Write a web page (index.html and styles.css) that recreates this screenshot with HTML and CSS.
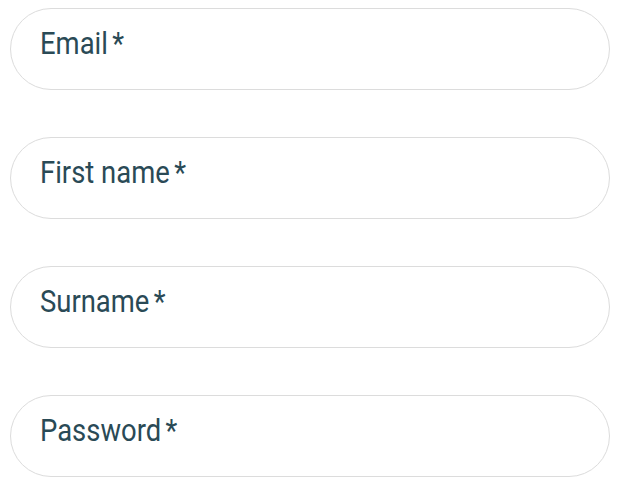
FILE: index.html
```html
<!DOCTYPE html>
<html>
<head>
<meta charset="utf-8">
<link rel="stylesheet" href="styles.css">
</head>
<body>
<form class="form">
  <label class="field"><span class="label">Email<span class="req">*</span></span></label>
  <label class="field"><span class="label">First name<span class="req">*</span></span></label>
  <label class="field"><span class="label">Surname<span class="req">*</span></span></label>
  <label class="field"><span class="label">Password<span class="req">*</span></span></label>
</form>
</body>
</html>
```
FILE: styles.css
```css
html, body {
  margin: 0;
  padding: 0;
  background: #fff;
}
.form {
  display: flex;
  flex-direction: column;
  gap: 47px;
  padding: 8px 13px 0 10px;
}
.field {
  display: flex;
  align-items: center;
  height: 80px;
  border: 1px solid #dcdcdc;
  border-radius: 41px;
  padding: 0 0 0 29px;
  box-sizing: content-box;
}
.label {
  font-family: Roboto, "Liberation Sans", sans-serif;
  font-size: 31px;
  color: #2a4a56;
  margin-top: -12px;
  transform: scaleX(0.885);
  transform-origin: left center;
}
.req {
  margin-left: 5px;
}
```
